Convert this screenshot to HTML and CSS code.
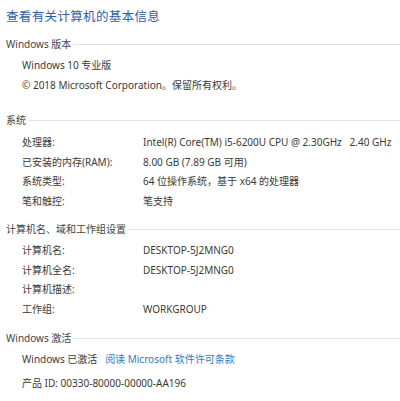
FILE: index.html
```html
<!DOCTYPE html>
<html lang="zh-CN">
<head>
<meta charset="utf-8">
<link rel="stylesheet" href="styles.css">
</head>
<body>
<div class="page">
  <h1 class="title">查看有关计算机的基本信息</h1>

  <section class="sec sec-edition">
    <div class="head"><span>Windows 版本</span><i class="rule"></i></div>
    <div class="plain">Windows 10 专业版</div>
    <div class="plain">© 2018 Microsoft Corporation。保留所有权利。</div>
  </section>

  <section class="sec sec-system">
    <div class="head"><span>系统</span><i class="rule"></i></div>
    <div class="row"><span class="k">处理器:</span><span class="v">Intel(R) Core(TM) i5-6200U CPU @ 2.30GHz&nbsp;&nbsp;&nbsp;2.40 GHz</span></div>
    <div class="row"><span class="k">已安装的内存(RAM):</span><span class="v">8.00 GB (7.89 GB 可用)</span></div>
    <div class="row"><span class="k">系统类型:</span><span class="v">64 位操作系统，基于 x64 的处理器</span></div>
    <div class="row"><span class="k">笔和触控:</span><span class="v">笔支持</span></div>
  </section>

  <section class="sec sec-name">
    <div class="head"><span>计算机名、域和工作组设置</span><i class="rule"></i></div>
    <div class="row"><span class="k">计算机名:</span><span class="v">DESKTOP-5J2MNG0</span></div>
    <div class="row"><span class="k">计算机全名:</span><span class="v">DESKTOP-5J2MNG0</span></div>
    <div class="row"><span class="k">计算机描述:</span><span class="v"></span></div>
    <div class="row"><span class="k">工作组:</span><span class="v">WORKGROUP</span></div>
  </section>

  <section class="sec sec-act">
    <div class="head"><span>Windows 激活</span><i class="rule"></i></div>
    <div class="plain act">Windows 已激活&nbsp;&nbsp;&nbsp;<span class="link">阅读 Microsoft 软件许可条款</span></div>
    <div class="plain pid">产品 ID: 00330-80000-00000-AA196</div>
  </section>
</div>
</body>
</html>
```

FILE: styles.css
```css
html, body {
  margin: 0;
  padding: 0;
  background: #ffffff;
}
body {
  font-family: "Noto Sans", "Noto Sans CJK SC", sans-serif;
  font-size: 10px;
  color: #3a3a3a;
}
.page {
  padding: 7px 0 0 6px;
}
.title {
  margin: 0;
  font-family: "Noto Sans CJK SC", sans-serif;
  font-size: 12.5px;
  font-weight: normal;
  color: #2a5fb0;
  line-height: 18px;
  letter-spacing: 0.35px;
}
.sec {
  display: flex;
  flex-direction: column;
}
.head {
  display: flex;
  align-items: center;
  height: 20px;
  color: #444;
}
.rule {
  flex: 1;
  height: 1px;
  background: #e3e3e3;
  margin-left: 2px;
  margin-top: 2px;
}
.plain {
  padding-left: 16px;
  height: 20px;
  line-height: 20px;
  white-space: nowrap;
}
.row {
  display: grid;
  grid-template-columns: 121px 1fr;
  padding-left: 16px;
  height: 19.5px;
  line-height: 19.5px;
  white-space: nowrap;
}
.sec-edition { margin-top: 8px; }
.sec-edition .head { margin-bottom: 2px; }
.sec-system { margin-top: 14px; }
.sec-system .head { margin-bottom: 4px; }
.sec-name { margin-top: 7px; }
.sec-name .head { margin-bottom: 3px; }
.sec-act { margin-top: 8px; }
.act { height: 22px; line-height: 22px; margin-top: 1px; }
.pid { height: 26px; line-height: 26px; }
.link { color: #2b7bd6; }
```
